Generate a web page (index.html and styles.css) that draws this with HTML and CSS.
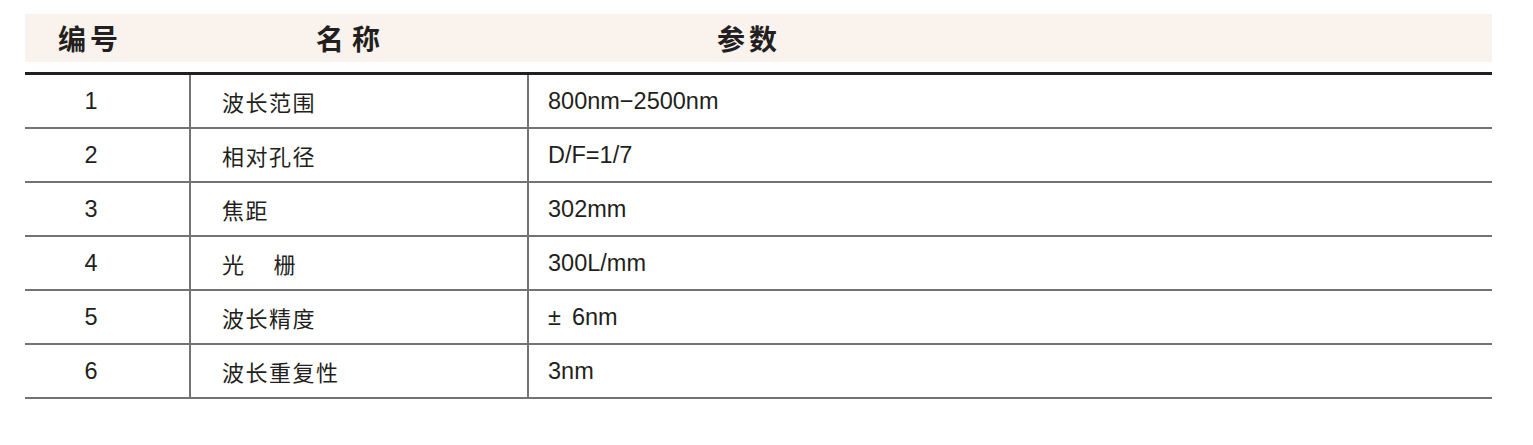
FILE: index.html
```html
<!DOCTYPE html>
<html lang="zh-CN">
<head>
<meta charset="utf-8">
<title>参数表</title>
<link rel="stylesheet" href="styles.css">
</head>
<body>
<div class="spec">
  <div class="head">
    <div class="h h-no">编号</div>
    <div class="h h-name">名称</div>
    <div class="h h-val">参数</div>
  </div>
  <div class="rule"></div>
  <div class="rows">
    <div class="c no">1</div><div class="c name">波长范围</div><div class="c val">800nm−2500nm</div>
    <div class="c no">2</div><div class="c name">相对孔径</div><div class="c val">D/F=1/7</div>
    <div class="c no">3</div><div class="c name">焦距</div><div class="c val">302mm</div>
    <div class="c no">4</div><div class="c name">光<span class="gap"></span>栅</div><div class="c val">300L/mm</div>
    <div class="c no">5</div><div class="c name">波长精度</div><div class="c val">±<span class="sp"></span>6nm</div>
    <div class="c no">6</div><div class="c name">波长重复性</div><div class="c val">3nm</div>
  </div>
</div>
</body>
</html>
```
FILE: styles.css
```css
html, body {
  margin: 0;
  padding: 0;
  background: #ffffff;
}
body {
  font-family: "Liberation Sans", "Noto Sans CJK SC", sans-serif;
  color: #231f20;
}
.spec {
  margin: 14px 0 0 25px;
  width: 1467px;
}
.head {
  display: grid;
  grid-template-columns: 164px 338px 1fr;
  height: 48px;
  align-items: center;
  background: #faf2ed;
}
.h {
  font-family: "Noto Sans CJK SC", sans-serif;
  font-weight: 700;
  font-size: 28px;
  letter-spacing: 4px;
  line-height: 1;
  color: #231f20;
}
.h-no { padding-left: 33px; }
.h-name { padding-left: 127px; letter-spacing: 8px; }
.h-val { padding-left: 190px; }
.rule {
  margin-top: 10px;
  height: 3px;
  background: #231f20;
}
.rows {
  display: grid;
  grid-template-columns: 164px 338px 1fr;
  grid-auto-rows: 54px;
}
.c {
  display: flex;
  align-items: center;
  border-bottom: 2px solid #737373;
  font-size: 23.5px;
}
.no {
  justify-content: center;
  padding-right: 32px;
}
.name {
  border-left: 2px solid #737373;
  padding-left: 31px;
  font-family: "Noto Sans CJK SC", sans-serif;
  font-size: 22px;
  letter-spacing: 1.5px;
}
.val {
  border-left: 2px solid #737373;
  padding-left: 19px;
}
.gap {
  display: inline-block;
  width: 28px;
}
.sp {
  display: inline-block;
  width: 11px;
}
```
